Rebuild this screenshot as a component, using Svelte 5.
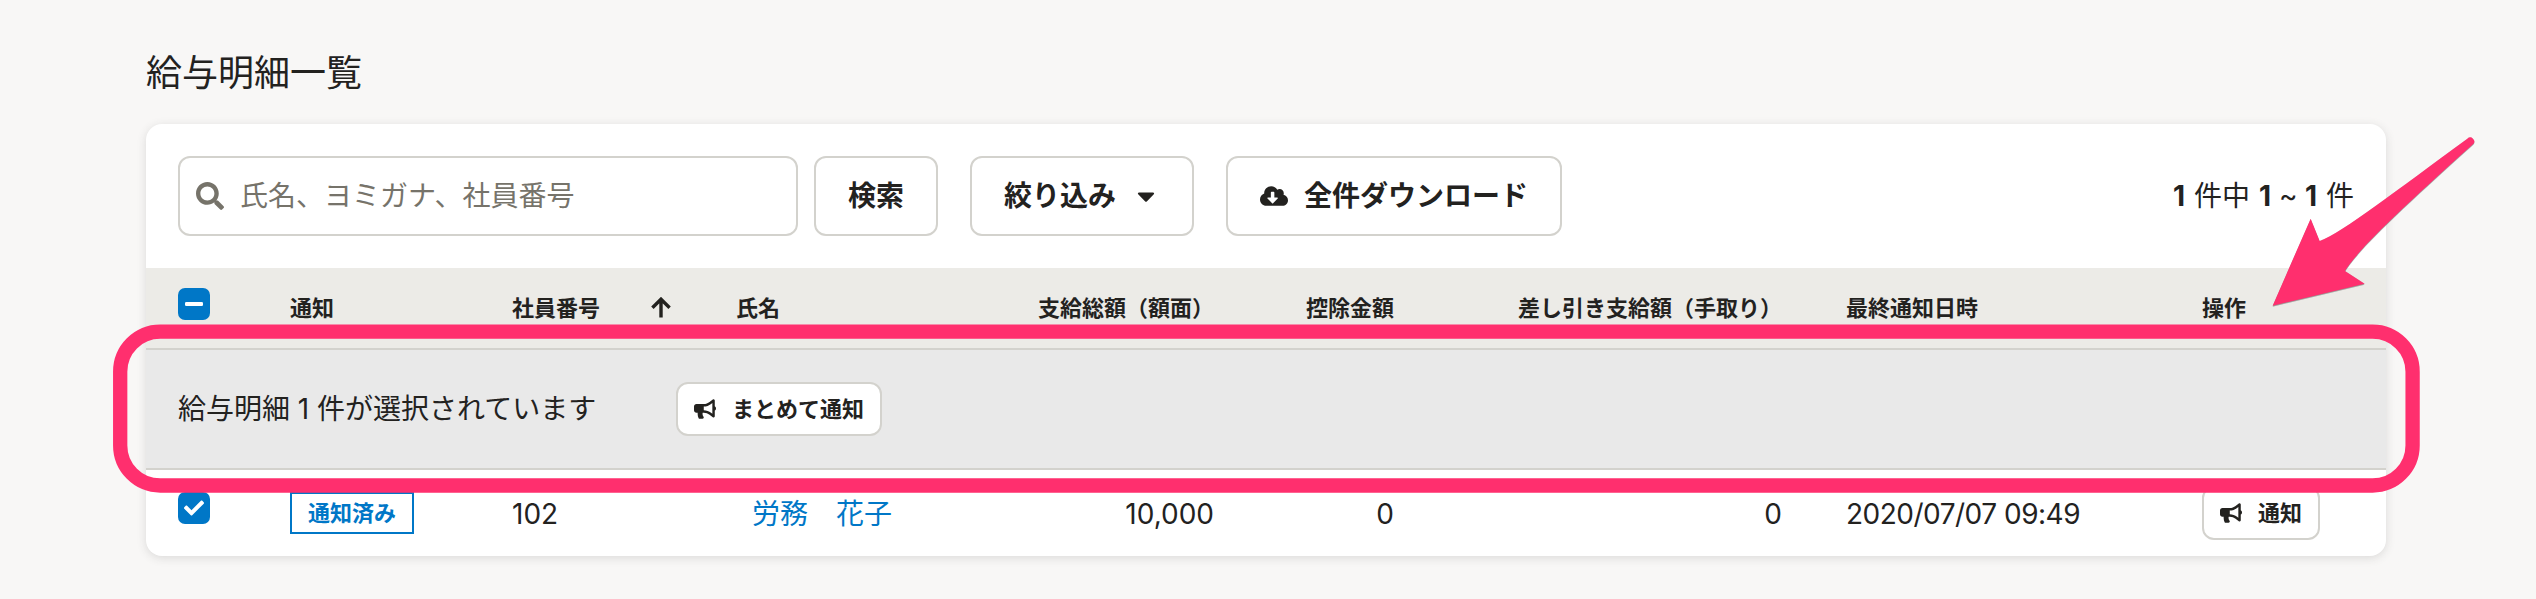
<script>
  const paths = {
    search: 'M505 442.7L405.3 343c-4.5-4.5-10.6-7-17-7H372c27.6-35.3 44-79.7 44-128C416 93.1 322.9 0 208 0S0 93.1 0 208s93.1 208 208 208c48.3 0 92.7-16.4 128-44v16.3c0 6.4 2.5 12.5 7 17l99.7 99.7c9.4 9.4 24.6 9.4 33.9 0l28.3-28.3c9.4-9.4 9.4-24.6.1-34zM208 336c-70.7 0-128-57.2-128-128 0-70.7 57.2-128 128-128 70.7 0 128 57.2 128 128 0 70.7-57.2 128-128 128z',
    cloud: 'M537.6 226.6c4.1-10.7 6.4-22.4 6.4-34.6 0-53-43-96-96-96-19.7 0-38.1 6-53.3 16.2C367 64.2 315.3 32 256 32c-88.4 0-160 71.6-160 160 0 2.7.1 5.4.2 8.1C40.2 219.8 0 273.2 0 336c0 79.5 64.5 144 144 144h368c70.7 0 128-57.3 128-128 0-61.9-44-113.6-102.4-125.4zm-132.9 88.7L299.3 420.7c-6.2 6.2-16.4 6.2-22.6 0L171.3 315.3c-10.1-10.1-2.9-27.3 11.3-27.3H248V176c0-8.8 7.2-16 16-16h48c8.8 0 16 7.2 16 16v112h65.4c14.2 0 21.4 17.2 11.3 27.3z',
    caret: 'M31.3 192h257.3c17.8 0 26.7 21.5 14.1 34.1L174.1 354.7c-7.8 7.8-20.5 7.8-28.3 0L17.2 226.1C4.6 213.5 13.5 192 31.3 192z',
    bullhorn: 'M576 240c0-23.63-12.95-44.04-32-55.12V32.01C544 23.26 537.02 0 512 0c-7.12 0-14.19 2.38-19.98 7.02l-85.03 68.03C364.28 109.19 310.66 128 256 128H64c-35.35 0-64 28.65-64 64v96c0 35.35 28.65 64 64 64h33.7c-1.39 10.48-2.18 21.14-2.18 32 0 39.77 9.26 77.35 25.56 110.94 5.19 10.69 16.52 17.06 28.4 17.06h74.28c26.05 0 41.69-29.84 25.9-50.56-16.4-21.52-26.15-48.36-26.15-77.44 0-11.11 1.62-21.79 4.41-32H256c54.66 0 108.28 18.81 150.98 52.95l85.03 68.03a32.023 32.023 0 0 0 19.98 7.02c24.92 0 32-22.78 32-32V295.13C563.05 284.04 576 263.63 576 240zm-96 141.42l-33.05-26.44C392.95 311.78 325.12 288 256 288v-96c69.12 0 136.95-23.78 190.95-66.98L480 98.58v282.84z',
    check: 'M173.898 439.404l-166.4-166.4c-9.997-9.997-9.997-26.206 0-36.204l36.203-36.204c9.997-9.998 26.207-9.998 36.204 0L192 312.69 432.095 72.596c9.997-9.997 26.207-9.997 36.204 0l36.203 36.204c9.997 9.997 9.997 26.206 0 36.204l-294.4 294.401c-9.998 9.997-26.207 9.997-36.204-.001z'
  };
</script>

{#snippet bullhorn()}
  <svg width="22" height="22" viewBox="0 0 576 512"><path d={paths.bullhorn} /></svg>
{/snippet}

<main>
  <h1>給与明細一覧</h1>

  <section class="card">
    <div class="toolbar">
      <div class="field">
        <svg width="28" height="28" viewBox="0 0 512 512"><path d={paths.search} /></svg>
        <span>氏名、ヨミガナ、社員番号</span>
      </div>
      <button class="find">検索</button>
      <button class="gap">絞り込み
        <svg width="28" height="28" viewBox="0 0 320 512"><path d={paths.caret} /></svg>
      </button>
      <button class="gap">
        <svg width="28" height="28" viewBox="0 0 640 512"><path d={paths.cloud} /></svg>
        全件ダウンロード
      </button>
      <p class="count"><b>1</b><span>件中</span><b>1</b><i>~</i><b>1</b><span>件</span></p>
    </div>

    <div class="grid head">
      <div>
        <span class="box">
          <svg width="32" height="32" viewBox="0 0 32 32"><rect x="7" y="14" width="18" height="4" rx="1.3" /></svg>
        </span>
      </div>
      <div>通知</div>
      <div class="sort">社員番号
        <svg width="22" height="22" viewBox="0 0 22 22"><path d="M11 20.5V3M2.4 10.7 11 2.2l8.6 8.5" /></svg>
      </div>
      <div>氏名</div>
      <div class="num">支給総額（額面）</div>
      <div class="num">控除金額</div>
      <div class="num">差し引き支給額（手取り）</div>
      <div>最終通知日時</div>
      <div>操作</div>
    </div>

    <div class="selection">
      <p>給与明細<span class="n">1</span>件が選択されています</p>
      <button class="small">{@render bullhorn()}まとめて通知</button>
    </div>

    <div class="grid row">
      <div>
        <span class="box">
          <svg width="20" height="20" viewBox="0 0 512 512"><path d={paths.check} /></svg>
        </span>
      </div>
      <div><span class="badge">通知済み</span></div>
      <div class="text">102</div>
      <div class="text"><a href="#detail">労務　花子</a></div>
      <div class="text num">10,000</div>
      <div class="text num">0</div>
      <div class="text num">0</div>
      <div class="text date">2020/07/07 09:49</div>
      <div><button class="small">{@render bullhorn()}通知</button></div>
    </div>
  </section>

  <svg class="marks" width="2536" height="599" viewBox="0 0 2536 599">
    <rect x="120.2" y="331.7" width="2292.4" height="153.8" rx="40" />
    <g transform="translate(2060 110) scale(.33333)">
      <path d="M638 587 752 326 779 393C850 366 1010 240 1222 86A12 12 0 0 1 1239 103C1000 318 895 420 855 483L914 521Z" />
    </g>
  </svg>
</main>

<style>
  :global(body) { background: #f8f7f6; }
  main {
    position: relative;
    box-sizing: border-box;
    width: 2536px;
    height: 599px;
    padding: 45px 150px 0 146px;
    overflow: hidden;
    background: #f8f7f6;
    color: #23221f;
    font: 28px/28px Inter, "Noto Sans CJK JP", sans-serif;
  }
  h1 { margin: 0 0 23px; font-size: 36px; font-weight: 400; line-height: 56px; }
  p { margin: 0; }
  svg { flex: none; fill: currentColor; }
  .card {
    width: 2240px;
    height: 432px;
    border-radius: 16px;
    background: #fff;
    box-shadow: 0 2px 10px rgba(51, 51, 51, .15);
  }
  .toolbar { display: flex; align-items: center; box-sizing: border-box; height: 144px; padding: 0 32px; }
  .field {
    display: flex;
    align-items: center;
    gap: 16px;
    box-sizing: border-box;
    width: 620px;
    height: 80px;
    padding: 0 16px;
    border: 2px solid #d3d2cd;
    border-radius: 12px;
    color: #76736a;
  }
  button {
    display: flex;
    align-items: center;
    gap: 16px;
    box-sizing: border-box;
    height: 80px;
    padding: 0 32px;
    border: 2px solid #d3d2cd;
    border-radius: 12px;
    background: #fff;
    color: inherit;
    font: inherit;
    font-weight: 700;
    white-space: nowrap;
  }
  .find { margin-left: 16px; }
  .gap { margin-left: 32px; }
  .small { height: 54px; padding: 0 16px; font-size: 22px; }
  .count { display: flex; margin-left: auto; }
  .count b { width: 11px; margin-right: 10px; }
  .count b:nth-of-type(2) { margin-right: 9px; }
  .count span { margin-right: 9px; }
  .count span:last-child { margin-right: 0; }
  .count i { width: 16px; margin-right: 10px; font-style: normal; }
  .grid {
    display: grid;
    grid-template-columns: 112px 222px 224px 302px 240px 180px 388px 356px 216px;
    align-items: center;
  }
  .grid > div { padding: 0 32px; white-space: nowrap; }
  .grid > .num { text-align: right; }
  .head { height: 80px; background: #ecebe7; font-size: 22px; font-weight: 700; line-height: 26px; }
  .sort { display: flex; align-items: center; justify-content: space-between; }
  .sort svg { fill: none; stroke: currentColor; stroke-width: 3.4; }
  .head .box { margin-top: -8px; }
  .row .box { margin-top: -10px; }
  .box {
    display: flex;
    align-items: center;
    justify-content: center;
    width: 32px;
    height: 32px;
    border-radius: 7px;
    background: #0077c7;
    color: #fff;
  }
  .selection {
    display: flex;
    align-items: center;
    box-sizing: border-box;
    height: 122px;
    padding: 0 32px;
    border: solid #d3d2cd;
    border-width: 2px 0;
    background: #e9e9e9;
  }
  .selection p { width: 498px; }
  .n { display: inline-block; width: 27px; text-align: center; }
  .row { height: 86px; }
  .grid > .text { padding-top: 2px; }
  .date { letter-spacing: -.5px; }
  .badge {
    display: inline-block;
    box-sizing: border-box;
    height: 42px;
    padding: 0 16px;
    border: 2px solid #0077c7;
    color: #0077c7;
    font-size: 22px;
    font-weight: 700;
    line-height: 38px;
    vertical-align: middle;
  }
  a { margin-left: 16px; color: #0077c7; text-decoration: none; }
  .marks { position: absolute; top: 0; left: 0; pointer-events: none; }
  .marks rect { fill: none; stroke: #ff2f6e; stroke-width: 14.3; }
  .marks g { fill: #ff2f6e; filter: drop-shadow(0 2px 1.5px rgba(0, 0, 0, .45)); }
</style>
